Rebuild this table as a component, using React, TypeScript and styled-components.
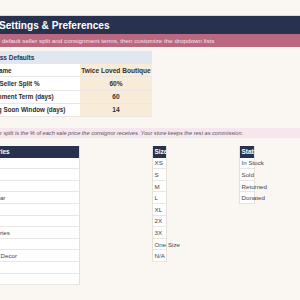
import React from 'react'
import styled, { createGlobalStyle } from 'styled-components'
import { Settings } from 'lucide-react'

const GlobalStyle = createGlobalStyle`
  html, body {
    margin: 0;
    padding: 0;
    background: #faf7f3;
    overflow: hidden;
  }
  body {
    font-family: "Liberation Sans", Arial, sans-serif;
  }
`

const NAVY = '#28324f'

// the sheet is scrolled a little to the right, so the first column starts off screen
const Page = styled.div`
  margin-left: -26px;
  width: calc(100% + 26px);
  padding-top: 15px;
`

const TitleBar = styled.h1`
  margin: 0;
  height: 18px;
  border-top: 1px solid #dcd8d4;
  background: ${NAVY};
  color: #fff;
  font-size: 10.1px;
  font-weight: 700;
  display: flex;
  align-items: center;
  gap: 5px;
  padding-left: 8px;
  white-space: nowrap;
`

const Subtitle = styled.div`
  height: 12.5px;
  background: #b96880;
  color: #f8e3ea;
  font-size: 6.25px;
  display: flex;
  align-items: center;
  padding-left: 6.3px;
  white-space: nowrap;
`

const DefaultsTable = styled.div`
  margin-top: 4px;
  width: 178px;
  display: grid;
  grid-template-columns: 106px 72px;
`

const SectionHeader = styled.div`
  grid-column: 1 / -1;
  height: 13.5px;
  background: #e2e6ee;
  color: ${NAVY};
  font-size: 6.5px;
  font-weight: 700;
  display: flex;
  align-items: center;
  padding-left: 4px;
`

const Cell = styled.div<{ $value?: boolean }>`
  height: 13.25px;
  box-sizing: border-box;
  border-bottom: 1px solid #ebe6e1;
  background: ${p => (p.$value ? '#f8ebd7' : '#fff')};
  color: ${p => (p.$value ? '#333' : '#2b2b2b')};
  font-size: ${p => (p.$value ? '6.6px' : '6.3px')};
  font-weight: 700;
  display: flex;
  align-items: center;
  justify-content: ${p => (p.$value ? 'center' : 'flex-start')};
  padding: 0 2.5px;
  white-space: nowrap;
`

const Note = styled.div`
  margin-top: 11px;
  height: 10.3px;
  background: #f6e6ed;
  color: #5b5358;
  font-size: 5.6px;
  font-style: italic;
  display: flex;
  align-items: center;
  padding-left: 13.6px;
  white-space: nowrap;
`

const Lists = styled.div`
  margin-top: 7.7px;
  display: grid;
  grid-template-columns: 106px 72px 87px 1fr;
  align-items: start;
`

const ListTable = styled.div<{ $col: number; $width: number }>`
  grid-column: ${p => p.$col};
  width: ${p => p.$width}px;
  box-sizing: border-box;
  border-right: 1px solid #e4e1dd;
  border-left: 1px solid #e4e1dd;
`

const ListHeader = styled.div`
  height: 11.6px;
  background: ${NAVY};
  color: #fff;
  font-size: 6.4px;
  font-weight: 700;
  display: flex;
  align-items: center;
  padding: 0 1.5px;
  overflow: hidden;
  white-space: nowrap;
`

const ListRow = styled.div`
  height: 11.6px;
  box-sizing: border-box;
  border-bottom: 1px solid #e8e5e2;
  background: #fff;
  color: #444;
  font-size: 6.2px;
  display: flex;
  align-items: center;
  padding: 0 1.5px;
  white-space: nowrap;
`

const defaults = [
  ['Store Name', 'Twice Loved Boutique'],
  ['Default Seller Split %', '60%'],
  ['Consignment Term (days)', '60'],
  ['Expiring Soon Window (days)', '14'],
]

const lists = [
  {
    title: 'Categories',
    col: 1,
    width: 106,
    items: ['Tops', 'Bottoms', 'Dresses', 'Outerwear', 'Shoes', 'Bags', 'Accessories', 'Jewelry', 'Home & Decor', 'Kids', 'Other'],
  },
  {
    title: 'Size',
    col: 3,
    width: 15,
    items: ['XS', 'S', 'M', 'L', 'XL', '2X', '3X', 'One Size', 'N/A'],
  },
  {
    title: 'Status',
    col: 4,
    width: 16,
    items: ['In Stock', 'Sold', 'Returned', 'Donated'],
  },
]

export default function App() {
  return (
    <>
      <GlobalStyle />
      <Page>
        <TitleBar>
          <Settings size={12} strokeWidth={2.4} />
          Settings &amp; Preferences
        </TitleBar>
        <Subtitle>Set the default seller split and consignment terms, then customize the dropdown lists</Subtitle>

        <DefaultsTable>
          <SectionHeader>Business Defaults</SectionHeader>
          {defaults.map(([label, value]) => (
            <React.Fragment key={label}>
              <Cell>{label}</Cell>
              <Cell $value>{value}</Cell>
            </React.Fragment>
          ))}
        </DefaultsTable>

        <Note>
          Seller split is the % of each sale price the consignor receives. Your store keeps the rest as commission.
        </Note>

        <Lists>
          {lists.map(list => (
            <ListTable key={list.title} $col={list.col} $width={list.width}>
              <ListHeader>{list.title}</ListHeader>
              {list.items.map(item => (
                <ListRow key={item}>{item}</ListRow>
              ))}
            </ListTable>
          ))}
        </Lists>
      </Page>
    </>
  )
}
